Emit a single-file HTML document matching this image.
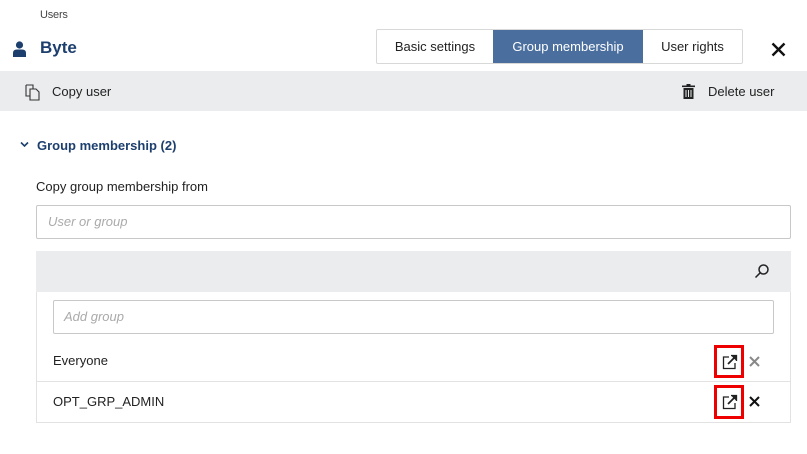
<!DOCTYPE html>
<html><head><style>
*{box-sizing:border-box;margin:0;padding:0}
body{width:807px;height:454px;background:#fff;font-family:"Liberation Sans",sans-serif;color:#222;position:relative;overflow:hidden;font-size:13px}
.a{position:absolute}
</style></head><body>
<div class="a" style="left:40px;top:9px;font-size:11px;color:#444;letter-spacing:-0.2px">Users</div>
<svg class="a" style="left:13px;top:41px" width="13" height="16" viewBox="0 0 13 16"><circle cx="6.5" cy="4" r="3.6" fill="#1d3f6e"/><path d="M0 16 V12 Q0 8.5 4 8.5 H9 Q13 8.5 13 12 V16Z" fill="#1d3f6e"/></svg>
<div class="a" style="left:40px;top:38px;font-size:17px;font-weight:bold;color:#1d3f6e">Byte</div>
<div class="a" style="left:376px;top:29px;width:367px;height:35px;border:1px solid #d8d8d8;border-radius:2px;display:flex;font-size:13px">
<div style="width:116px;text-align:center;line-height:34px">Basic settings</div>
<div style="width:150px;text-align:center;line-height:34px;background:#4a6f9f;color:#fff">Group membership</div>
<div style="flex:1;text-align:center;line-height:34px">User rights</div>
</div>
<svg class="a" style="left:771px;top:42px" width="15" height="15" viewBox="0 0 15 15"><path d="M1.5 1.5L13.5 13.5M13.5 1.5L1.5 13.5" stroke="#111" stroke-width="2.4"/></svg>
<div class="a" style="left:0;top:71px;width:807px;height:40px;background:#ebecee"></div>
<svg class="a" style="left:25px;top:84px" width="17" height="17" viewBox="0 0 17 17" fill="none" stroke="#333" stroke-width="1.1"><path d="M1 1H8V5M1 1V12H5"/><path d="M5 5H11L14 8V16H5Z"/></svg>
<div class="a" style="left:52px;top:84px">Copy user</div>
<svg class="a" style="left:682px;top:84px" width="13" height="15" viewBox="0 0 13 15" fill="#222"><rect x="0" y="1.5" width="13" height="1.6"/><rect x="4.5" y="0" width="4" height="2"/><path d="M1.5 4H11.5V15H1.5Z"/><path d="M4 6V13M6.5 6V13M9 6V13" stroke="#ebecee" stroke-width="1"/></svg>
<div class="a" style="left:708px;top:84px">Delete user</div>
<svg class="a" style="left:20px;top:141px" width="9" height="7" viewBox="0 0 9 7"><path d="M1 1.5L4.5 5L8 1.5" stroke="#1d3f6e" stroke-width="1.6" fill="none"/></svg>
<div class="a" style="left:37px;top:138px;font-weight:bold;color:#1d3f6e">Group membership (2)</div>
<div class="a" style="left:36px;top:179px">Copy group membership from</div>
<div class="a" style="left:36px;top:205px;width:755px;height:34px;border:1px solid #c8c8c8;border-radius:2px;padding-left:11px;line-height:32px;font-style:italic;color:#aaa">User or group</div>
<div class="a" style="left:36px;top:251px;width:755px;height:172px;border:1px solid #e2e2e2;border-top:none"></div>
<div class="a" style="left:36px;top:251px;width:755px;height:41px;background:#ebecee"></div>
<svg class="a" style="left:754px;top:263px" width="16" height="16" viewBox="0 0 16 16" fill="none" stroke="#222" stroke-width="1.5"><circle cx="9.5" cy="6.5" r="4.5"/><path d="M6.3 9.7L1.5 14.5"/></svg>
<div class="a" style="left:53px;top:300px;width:721px;height:34px;border:1px solid #c8c8c8;border-radius:2px;padding-left:10px;line-height:32px;font-style:italic;color:#aaa">Add group</div>
<div class="a" style="left:53px;top:353px">Everyone</div>
<div class="a" style="left:37px;top:381px;width:753px;height:1px;background:#e2e2e2"></div>
<div class="a" style="left:53px;top:394px">OPT_GRP_ADMIN</div>
<div class="a" style="left:714px;top:345px;width:30px;height:33px;border:3px solid #e00"></div>
<div class="a" style="left:714px;top:385px;width:30px;height:34px;border:3px solid #e00"></div>
<svg class="a" style="left:722px;top:354px" width="16" height="16" viewBox="0 0 16 16" fill="none" stroke="#222" stroke-width="1.3"><path d="M7 3H1.5V14.5H13V9"/><path d="M6 10L14 2" stroke-width="1.8"/><path d="M9 1.5H14.5V7" fill="#222"/></svg>
<svg class="a" style="left:722px;top:394px" width="16" height="16" viewBox="0 0 16 16" fill="none" stroke="#222" stroke-width="1.3"><path d="M7 3H1.5V14.5H13V9"/><path d="M6 10L14 2" stroke-width="1.8"/><path d="M9 1.5H14.5V7" fill="#222"/></svg>
<svg class="a" style="left:749px;top:356px" width="11" height="11" viewBox="0 0 11 11"><path d="M1 1L10 10M10 1L1 10" stroke="#888" stroke-width="2"/></svg>
<svg class="a" style="left:749px;top:396px" width="11" height="11" viewBox="0 0 11 11"><path d="M1 1L10 10M10 1L1 10" stroke="#111" stroke-width="2"/></svg>
</body></html>
